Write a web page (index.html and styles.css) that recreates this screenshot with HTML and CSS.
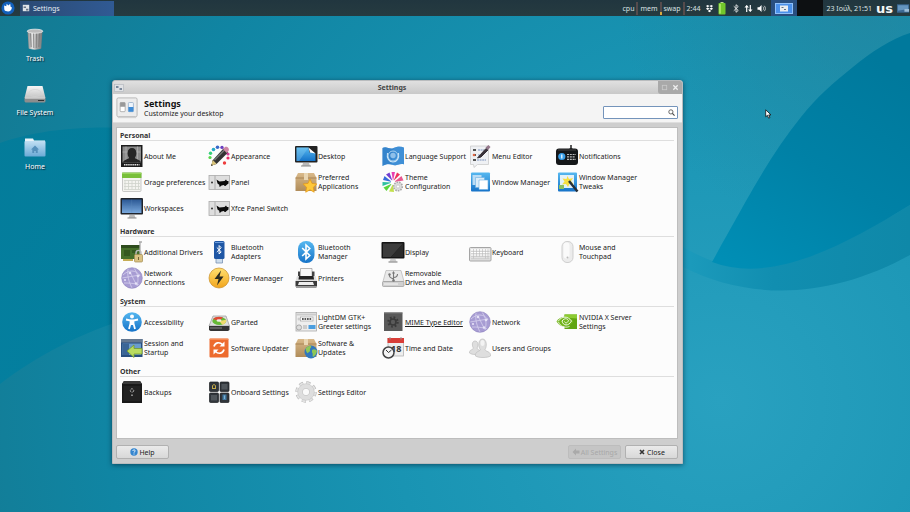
FILE: index.html
```html
<!DOCTYPE html>
<html lang="en">
<head>
<meta charset="utf-8">
<title>Settings</title>
<link rel="stylesheet" href="styles.css">
</head>
<body>
<svg class="defs" aria-hidden="true">
  <defs>
    <linearGradient id="gBlue" x2="0" y2="1"><stop stop-color="#56b8f0"/><stop offset="1" stop-color="#1673c8"/></linearGradient>
    <linearGradient id="gScreen" x2="0" y2="1"><stop stop-color="#2b5894"/><stop offset="1" stop-color="#79a8dc"/></linearGradient>
    <linearGradient id="gGrey" x2="0" y2="1"><stop stop-color="#f6f6f6"/><stop offset="1" stop-color="#c2c2c2"/></linearGradient>
    <linearGradient id="gMetal"><stop stop-color="#888"/><stop offset=".35" stop-color="#e6e6e6"/><stop offset=".6" stop-color="#aaa"/><stop offset="1" stop-color="#777"/></linearGradient>
    <linearGradient id="gBox" x2="0" y2="1"><stop stop-color="#d9b98a"/><stop offset="1" stop-color="#b08c5a"/></linearGradient>
    <linearGradient id="gGold" x2="0" y2="1"><stop stop-color="#ffe070"/><stop offset="1" stop-color="#f2a51c"/></linearGradient>
    <linearGradient id="gFolder" x2="0" y2="1"><stop stop-color="#c2e0f3"/><stop offset="1" stop-color="#6baad6"/></linearGradient>
  </defs>
  <symbol id="about" viewBox="0 0 24 24"><rect x="1" y="1" width="21.500" height="22" fill="#1c1c1c"/><rect x="2.500" y="2.500" width="18.500" height="16" fill="#8b8b8b"/><path d="M6 2.500v16M17.500 2.500v16M2.500 8h18" stroke="#b5b5b5" stroke-width=".7"/><path d="M3 18.500c1-3.500 6-3 6-5-2-2-2.500-9.500 3-9.500s5 7.500 3 9.500c0 2 5 1.500 6 5z" fill="#262626"/><path d="M4 20.800h15.500" stroke="#ddd" stroke-width="1.600" stroke-dasharray="1.500 .6"/></symbol>
  <symbol id="appearance" viewBox="0 0 24 24"><circle cx="3" cy="13.500" r="1.600" fill="#57d64a"/><circle cx="3.500" cy="9.300" r="1.700" fill="#35cf7b"/><circle cx="6.500" cy="5.500" r="1.800" fill="#27a9c7"/><circle cx="10.500" cy="3.300" r="1.800" fill="#3769c9"/><circle cx="15" cy="3.400" r="1.700" fill="#6a3fc0"/><circle cx="21" cy="10" r="1.600" fill="#d83c9b"/><circle cx="21" cy="14" r="1.600" fill="#e92f65"/><circle cx="17.500" cy="19" r="1.700" fill="#ee3d3d"/><path d="M4.500 21.500l1-5L16.500 4.500l4.500 4L9.500 20z" fill="#333"/><path d="M7.500 16L18 5.500" stroke="#777" stroke-width="1.400"/><path d="M16 5l2-2c2-1 5 1.500 3.500 4l-1.800 2z" fill="#cf87a5"/><path d="M4 22l1.800-6 3.800 3.800z" fill="#d9c47b"/><path d="M4 22l.7-2 1.200 1.200z" fill="#222"/></symbol>
  <symbol id="desktop" viewBox="0 0 24 24"><path d="M9 19h6l1 3H8z" fill="#bbb"/><path d="M7 22h10" stroke="#888"/><rect x="1" y="2" width="22.500" height="16.500" rx="1" fill="#222"/><path d="M2.500 3.500h12l7 6V17h-19z" fill="url(#gBlue)"/><path d="M2.500 3.500h12L5 17H2.500z" fill="#8fd2f2" opacity=".35"/><path d="M14.500 3.500h7v6c-2-2-4-2-6-1z" fill="#222"/><path d="M14.500 3.500l7 6-5.500-1z" fill="#fff"/></symbol>
  <symbol id="language" viewBox="0 0 24 24"><path d="M1.500 4c4-2.500 7 2 11 0s7-2 10.500-.5v17c-4-1.500-7 2-11 .5s-7-1-10.500 1z" fill="#3f8fd6"/><path d="M1.500 4c4-2.500 7 2 11 0l-2 16.500c-3-1-6-.5-9 1.500z" fill="#2b79c2" opacity=".5"/><circle cx="12" cy="12" r="5" fill="none" stroke="#a9d1f0"/><circle cx="12" cy="11.500" r="2.700" fill="#8fc0ea"/><path d="M6.500 9c-1 5 1.500 9 5.500 9s6.500-4 5.500-9" fill="none" stroke="#c6e2f6" stroke-width="1.100"/></symbol>
  <symbol id="menu" viewBox="0 0 24 24"><path d="M2.500 2h18v18.500h-11L6 23.500l-.5-3h-3z" fill="#eff1f4" stroke="#ccc" stroke-width=".8"/><path d="M5 6h3M5 11h3M5 16h3" stroke="#555" stroke-width="2"/><path d="M10 6h6M10 11h4M9 16h9" stroke="#7d93bd" stroke-width="1.200" stroke-dasharray="2 .6"/><circle cx="6" cy="11" r="1.300" fill="#d64"/><path d="M9.500 14l3-3.500L18 4.500l2 1.500-7 7z" fill="#38323a" stroke="#38323a"/><path d="M17.500 3.500l3-2.500 2 2-2.500 3z" fill="#96798c"/></symbol>
  <symbol id="notify" viewBox="0 0 24 24"><path d="M16 1v5M14.500 5h3" stroke="#222" stroke-width="1.500"/><rect x="1" y="4.500" width="22" height="16.500" rx="3" fill="#151719"/><path d="M3 6h18" stroke="#444"/><circle cx="6.800" cy="12.500" r="3.600" fill="#3aa0ea"/><path d="M6.800 10.500v4" stroke="#fff" stroke-width="1.200"/><path d="M12 10.500h9M12 12.800h8M12 15.300h9" stroke="#bbb" stroke-width="1.200" stroke-dasharray="2 .8"/></symbol>
  <symbol id="orage" viewBox="0 0 24 24"><rect x="2.500" y="3" width="18.500" height="18.500" rx="1" fill="#f4f4f0" stroke="#bbb" stroke-width=".8"/><path d="M2 2.500h19.500V8H2z" fill="#79bf3a"/><path d="M2 3.500h19.500" stroke="#98d55c"/><path d="M5 10.500v9M8.500 10.500v9M12 10.500v9M15.500 10.500v9M18.500 10.500v9M4 10.500h16M4 13.500h16M4 16.500h16M4 19.500h16" stroke="#cfd3cc" stroke-width=".8"/></symbol>
  <symbol id="panel" viewBox="0 0 24 24"><rect x="2" y="5.500" width="20.500" height="14" fill="#dedede" stroke="#aaa" stroke-width=".8"/><path d="M8 5.500v14" stroke="#aaa"/><circle cx="5" cy="12.500" r="1" fill="#333"/><path d="M9.500 9.500l3 2 5-.5 1.500-1.500 1 1.500h1.500v2.500l-2 1.500-1 1h-1l-.5-1-2.500.5-1 1h-1.500l.5-1.500-2-1.500z" fill="#0b0b0b"/></symbol>
  <symbol id="preferred" viewBox="0 0 24 24"><path d="M4 3h16l2.500 5v13h-21V8z" fill="url(#gBox)"/><path d="M1.500 8h21" stroke="#a88454"/><path d="M10 3h4v7h-4z" fill="#e9d6b3"/><path d="M16 9l2 4.400 4.800.6-3.500 3.300.9 4.900L16 19.800l-4.300 2.400.9-4.900L9.200 14l4.800-.6z" fill="#ffc83a" stroke="#e69a18" stroke-width=".8"/></symbol>
  <symbol id="theme" viewBox="0 0 24 24"><g><path d="M12 11L10.500 2h3.500z" fill="#e83eb0"/><path d="M12.500 11L16 2.500l3 2z" fill="#ed315d"/><path d="M11.500 11L5 4.500l3.500-2z" fill="#743fd1"/><path d="M11 12L2 10l1.500-4z" fill="#386bdb"/><path d="M11 12.500L1.500 16v-4z" fill="#2fc1a0"/><path d="M11 13.500L5.500 21l-3-3.500z" fill="#58d53c"/><path d="M12 14l1 8-5-.5z" fill="#c2e04c"/><path d="M13 12l7.500-6 2 4.500z" fill="#e9578f"/></g><circle cx="12" cy="12.500" r="2.200" fill="#fff"/><circle cx="17" cy="16.500" r="4.300" fill="#ddd" stroke="#aaa" stroke-width="1.600" stroke-dasharray="1.600 1"/><circle cx="17" cy="16.500" r="1.600" fill="#fff" stroke="#bbb" stroke-width=".6"/></symbol>
  <symbol id="wm" viewBox="0 0 24 24"><rect x="3" y="2.500" width="19" height="19" rx="1" fill="url(#gBlue)"/><path d="M4.500 5h9v10h-9z" fill="#b9dcf5"/><path d="M7.500 7.500h9v10h-9z" fill="#dbedf9" stroke="#6caee2" stroke-width=".6"/><path d="M11 10h9v9.500h-9z" fill="#fff" stroke="#6caee2" stroke-width=".6"/></symbol>
  <symbol id="tweaks" viewBox="0 0 24 24"><rect x="3" y="2.500" width="19" height="19" rx="1" fill="url(#gBlue)"/><path d="M5 5h14v13H5z" fill="#e3f1fa"/><path d="M12.500 6l1.500 3 4-1-2 3 2.500 3-4 0-1.500 3-2-3-4 .5 2.500-3-2-3 4 .5z" fill="#f7df42"/><path d="M14 11l8.500 10.500" stroke="#27303a" stroke-width="2.400"/><path d="M4 15h5v4H4z" fill="#8cbf65"/></symbol>
  <symbol id="workspaces" viewBox="0 0 24 24"><path d="M9.500 19h5l1 3h-7z" fill="#bbb"/><path d="M7.500 22h9" stroke="#888"/><rect x=".5" y="2" width="22.500" height="16.500" rx="1" fill="#20242b"/><path d="M2 3.500h19.500V17H2z" fill="url(#gScreen)"/><path d="M11.700 3.500V17M2 10.300h19.500" stroke="#5f8abb" stroke-width=".3"/></symbol>
  <symbol id="drivers" viewBox="0 0 24 24"><path d="M1 5h19v14H1z" fill="#466f2b"/><path d="M1 5h19v3H1z" fill="#2e4c1d"/><path d="M4 10h6v6H4zM12 10h4v3h-4z" fill="#355820"/><path d="M3 19v2h10v-2z" fill="#c6ad55"/><path d="M20 2v19M22 2h-3" stroke="#aaa" stroke-width="1.300"/><path d="M16 15v-2c0-3.500 5-3.500 5 0v2" fill="none" stroke="#bbb" stroke-width="1.400"/><rect x="14.500" y="14.500" width="8" height="7.500" rx="1" fill="#dac283" stroke="#a28b50" stroke-width=".7"/><path d="M18.500 17v3" stroke="#756333"/></symbol>
  <symbol id="btadapter" viewBox="0 0 24 24"><path d="M9 18h6.500v5H9z" fill="#cdddec" stroke="#7892b4" stroke-width=".8"/><rect x="7" y="1" width="10.500" height="18" rx="1.500" fill="#1f57a5"/><path d="M8 2.500h8.500" stroke="#6b9bdb"/><path d="M9.800 7.500l4.400 4.300-2.100 2.200V5.500l2.100 2.200-4.400 4.300" fill="none" stroke="#fff"/></symbol>
  <symbol id="bt" viewBox="0 0 24 24"><rect x="4" y="1" width="16.500" height="22" rx="8" fill="url(#gBlue)"/><path d="M8.200 8l7.600 7.500-3.800 3.500V5l3.800 3.500L8.200 16" fill="none" stroke="#fff" stroke-width="1.600"/></symbol>
  <symbol id="display" viewBox="0 0 24 24"><path d="M9.500 19h5l1 2.500h-7z" fill="#ccc"/><path d="M7.500 22h9" stroke="#777"/><rect x=".5" y="2" width="23" height="16.500" rx="1" fill="#151515"/><path d="M2 3.500h20L10 17H2z" fill="#3c3c3c"/><path d="M22 3.500V17H10z" fill="#2a2a2a"/></symbol>
  <symbol id="keyboard" viewBox="0 0 24 24"><rect x="1.500" y="7.500" width="21.500" height="13.500" rx="1" fill="#e2e2e2" stroke="#a5a5a5"/><path d="M3 10h18.500M3 12.500h18.500M3 15h18.500" stroke="#fff" stroke-width="1.600"/><path d="M3 11.300h18.500M3 13.800h18.500M3 16.300h18.500M5.500 9v9.500M8.500 9v7.500M11.500 9v7.500M14.500 9v7.500M17.500 9v9.500M20 9v9.500M3 18.800h18.500" stroke="#b9b9b9" stroke-width=".6"/></symbol>
  <symbol id="mouse" viewBox="0 0 24 24"><rect x="7" y="1.500" width="11" height="21" rx="5" fill="#ececec" stroke="#cfcfcf"/><rect x="8.500" y="2.500" width="6" height="16" rx="3" fill="#fafafa"/><circle cx="12.500" cy="17.500" r="1" fill="#bbb"/></symbol>
  <symbol id="net" viewBox="0 0 24 24"><circle cx="12" cy="12" r="10.300" fill="#a79cd3"/><path d="M3 9c5-5 13-6 17 1M4 17c4 0 10 0 15 2M8 3c-1 7 1 13 4 19M14 2c4 6 5 11 3 18M2 12l18-3M10 6l6 12" fill="none" stroke="#d6d0ee" stroke-width=".8"/><circle cx="10" cy="7" r="1.300" fill="#e6e2f7"/><circle cx="18" cy="10" r="1.300" fill="#e6e2f7"/><circle cx="16" cy="17.500" r="1.200" fill="#e6e2f7"/><circle cx="5" cy="14" r="1.100" fill="#e6e2f7"/><circle cx="12" cy="12" r="10.300" fill="none" stroke="#8c80be" stroke-width=".6"/></symbol>
  <symbol id="power" viewBox="0 0 24 24"><circle cx="12" cy="12" r="10" fill="url(#gGold)" stroke="#c88d24" stroke-width=".7"/><path d="M14 4.500L7.500 13h4l-1.500 6.500 6.500-9h-4z" fill="#2b2b20"/></symbol>
  <symbol id="printer" viewBox="0 0 24 24"><path d="M6.500 2.500h11.500v9H6.500z" fill="#f7f7f7" stroke="#999" stroke-width=".7"/><path d="M4 5.500h2v5H4zM18 5.500h2.500v5H18z" fill="#444"/><path d="M3 10h18.500l1.500 5H1.500z" fill="#dedede"/><path d="M5 10h14.500l.5 3.500H4.500z" fill="#222"/><path d="M1.500 15h21.500v5.500H1.500z" fill="#3b3b3b"/><path d="M5 16h14l1 3H4z" fill="#eee"/><path d="M2 21.500h20.500" stroke="#999"/></symbol>
  <symbol id="removable" viewBox="0 0 24 24"><path d="M5 4.500h15l3 11H2z" fill="#e9e9e9" stroke="#b5b5b5" stroke-width=".7"/><rect x="1.500" y="15.500" width="21.500" height="5" rx="1" fill="#d0d0d0" stroke="#999" stroke-width=".7"/><path d="M3 18h14" stroke="#f7f7f7"/><path d="M12.500 14.500V6.500M12.500 13c-3-1-4.500-2-4-4M12.500 11.500c3 0 4-2 4-3.500" fill="none" stroke="#777" stroke-width="1.100"/><path d="M11 7.500l1.500-2.500L14 7.500z" fill="#777"/><circle cx="8.500" cy="8.500" r="1.200" fill="#777"/><circle cx="12.500" cy="14.500" r="1.300" fill="#777"/></symbol>
  <symbol id="access" viewBox="0 0 24 24"><circle cx="12" cy="12" r="9.800" fill="url(#gBlue)"/><circle cx="12" cy="6.500" r="2" fill="#fff"/><path d="M6 9.500l4.500 1v3L9 19M18 9.500l-4.500 1v3L15 19" fill="none" stroke="#fff" stroke-width="1.800"/><path d="M10.500 9.500h3V15h-3z" fill="#fff"/></symbol>
  <symbol id="gparted" viewBox="0 0 24 24"><path d="M6 6h13l3.500 10H2z" fill="#ddd" stroke="#999" stroke-width=".7"/><path d="M2 16h20.500v4l-1.500 1H3.500L2 20z" fill="#333"/><path d="M3 18h12" stroke="#888"/><ellipse cx="12.300" cy="11" rx="7" ry="4" fill="#65b936"/><path d="M12.300 11L6 9c2-2.500 7-3 10-1.500z" fill="#e04a36"/><path d="M12.300 11l3 3.800c3-.8 4.500-3 3.900-5z" fill="#eed96c"/><ellipse cx="12" cy="10.500" rx="2.500" ry="1.300" fill="#f1eee3"/></symbol>
  <symbol id="lightdm" viewBox="0 0 24 24"><rect x="2" y="2.500" width="20.500" height="18.500" fill="#eee" stroke="#aaa" stroke-width=".8"/><path d="M2 4.500h20.500" stroke="#ccc" stroke-width="2"/><rect x="6.500" y="7" width="12.500" height="4" fill="#fff" stroke="#999" stroke-width=".6"/><path d="M8 9h9.500" stroke="#222" stroke-width="1.700" stroke-dasharray="1.700 .8"/><rect x="14.500" y="15" width="7" height="4" fill="#4b9edf"/><path d="M9 15h4v4H9z" fill="#ccc"/><circle cx="5" cy="17.500" r="2.600" fill="#ddd" stroke="#999" stroke-width=".8"/><circle cx="5" cy="9" r="1.500" fill="#ccc"/></symbol>
  <symbol id="mime" viewBox="0 0 24 24"><rect x="3" y="2.500" width="18.500" height="18.500" fill="#5a5a5a"/><path d="M3 3h18.500" stroke="#777"/><circle cx="12" cy="12" r="4.600" fill="none" stroke="#3a3a3a" stroke-width="2.200" stroke-dasharray="1.700 1.910"/><circle cx="12" cy="12" r="3" fill="none" stroke="#3a3a3a" stroke-width="1.600"/></symbol>
  <symbol id="nvidia" viewBox="0 0 24 24"><path d="M9.500 4.500H22v14.500H9.500z" fill="#62a512"/><path d="M9.500 4.500H22v4l-12.500-1z" fill="#8ccb31"/><path d="M1.500 11.500C5 6 13 4.500 18.500 11.500 14 18 6 19 1.500 11.500z" fill="#72b51c"/><path d="M3 11.500c4-6 10-5.500 13.500-.5-3 5.500-8.500 5-9.500 0 2.500-3 5-3 6.500-.3-1.500 3-3.500 2.500-4 .8" fill="none" stroke="#f3faea" stroke-width="1"/><path d="M3.500 12c1.500 4 6 6.500 11 4.500" fill="none" stroke="#fff" stroke-width=".8"/></symbol>
  <symbol id="session" viewBox="0 0 24 24"><rect x="1" y="3" width="21.500" height="18" fill="#284f80"/><rect x="1" y="3" width="21.500" height="3.500" fill="#657991"/><path d="M2.500 7.500H21v11.500H2.500z" fill="#6b9dcc"/><path d="M2.500 7.500H9v11.500H2.500z" fill="#3a6596"/><path d="M7 15l7-6v3.500h8V18h-8v3.500z" fill="#b9dc60" stroke="#739b2e" stroke-width=".8"/></symbol>
  <symbol id="updater" viewBox="0 0 24 24"><rect x="2.500" y="2.500" width="19" height="19" rx="1" fill="#ed6b2e"/><path d="M2.500 3.200h19" stroke="#f99b68"/><path d="M7 10.500c1-4 5.500-5 8.500-2M17 13.500c-1 4-5.500 5-8.500 2" fill="none" stroke="#fff" stroke-width="1.700"/><path d="M17.500 5.500v5h-5zM6.500 18.500v-5h5z" fill="#fff"/></symbol>
  <symbol id="software" viewBox="0 0 24 24"><path d="M4 3h16l2.500 5v13h-21V8z" fill="url(#gBox)"/><path d="M1.500 8h21" stroke="#a88454"/><path d="M10 3h4v6h-4z" fill="#e9d6b3"/><circle cx="17" cy="16" r="6.500" fill="#3177bd"/><path d="M12 12c2-2 4-2.500 5-2 1 1.500-1.500 2-1 4s-2 2-2 3-3-2-2-5zM18 14c2-1.500 4-.5 5 1-.5 3-2 5-4 6-1-2 .5-3-1-4.500z" fill="#8ec756"/></symbol>
  <symbol id="users" viewBox="0 0 24 24"><g fill="#dedede" stroke="#bdbdbd" stroke-width=".7"><path d="M1.500 17c0-4 3-2.500 4-5-1.500-1.500-2-7 1.500-7s3.500 5 2 7c.5 2.500 4 1 4 5-2 2-9 2-11.500 0z"/><path d="M7.500 20c-.5-5 4-4 5-6.500-2.500-2-2.500-10.500 2-10.500s4.500 8 2.500 10.500c.5 2.500 6 1.500 5.500 6.500-3 2-12 2-15 0z"/></g><ellipse cx="14.500" cy="7" rx="2" ry="3" fill="#f3f3f3"/></symbol>
  <symbol id="backups" viewBox="0 0 24 24"><path d="M4 1h16l2 3v19H2V4z" fill="#191919"/><path d="M4 1h16l2 3H2z" fill="#3a3a3a"/><path d="M3.500 6h17v15h-17z" fill="#222"/><circle cx="12" cy="10.500" r="1.700" fill="none" stroke="#bbb" stroke-dasharray="2 1"/><path d="M12 14.500v1.500" stroke="#ccc" stroke-width="1.200"/></symbol>
  <symbol id="onboard" viewBox="0 0 24 24"><g fill="#30353a" stroke="#1c1f22" stroke-width=".7"><rect x="2.500" y="2" width="9" height="9.500" rx="1"/><rect x="13" y="2" width="9" height="9.500" rx="1"/><rect x="2.500" y="13" width="9" height="9.500" rx="1"/><rect x="13" y="13" width="9" height="9.500" rx="1"/></g><path d="M14.500 4h6v5.500h-6zM4 15h6v5.500H4z" fill="#4f555a"/><path d="M5 8.500h4M5.500 8V5.500c0-1 3-1 3 0V8" fill="none" stroke="#c4aa49"/><path d="M15.500 14.500h4v5.500h-4z" fill="#417aa3"/><path d="M17.500 15.500v3.500" stroke="#7fb0d0"/></symbol>
  <symbol id="gear" viewBox="0 0 24 24"><circle cx="12" cy="12" r="9" fill="none" stroke="#b4b4b4" stroke-width="3.400" stroke-dasharray="4 3.070"/><circle cx="12" cy="12" r="8.900" fill="none" stroke="#e4e4e4" stroke-width="2.400" stroke-dasharray="3.400 3.590" stroke-dashoffset="-.3"/><circle cx="12" cy="12" r="6.300" fill="none" stroke="#dedede" stroke-width="4"/><circle cx="12" cy="12" r="8.300" fill="none" stroke="#c5c5c5" stroke-width=".6"/><circle cx="12" cy="12" r="3.800" fill="#fafafa" stroke="#bbb" stroke-width=".8"/></symbol>
  <symbol id="toggle" viewBox="0 0 24 24"><rect x="1" y="1" width="22" height="20.500" rx="1.500" fill="#ececec" stroke="#b3b3b3"/><path d="M2 22.500h20" stroke="#ccc"/><rect x="4.500" y="6" width="5.500" height="10" rx="1" fill="#fff" stroke="#999" stroke-width=".8"/><path d="M4.500 6H10v4.500H4.500z" fill="#999"/><rect x="13.500" y="6" width="5.500" height="10" rx="1" fill="#eef5fc" stroke="#8fa9c5" stroke-width=".8"/><path d="M13.500 11H19v5h-5.500z" fill="#3f8cd6"/></symbol>
  <symbol id="mini" viewBox="0 0 10 8"><rect x=".5" y=".5" width="9" height="7" fill="#e0e2e5" stroke="#b5b9bf" stroke-width=".7"/><path d="M2 2h2.500v2H2zM5.500 4H8v2H5.500z" fill="#7a889a"/></symbol>
</svg>

<main class="desktop">
  <svg class="wallpaper" viewBox="0 0 910 512" preserveAspectRatio="none" aria-hidden="true">
    <defs>
      <radialGradient id="sky" gradientUnits="userSpaceOnUse" cx="720" cy="400" r="820"><stop stop-color="#29a1c0"/><stop offset=".4" stop-color="#1994b3"/><stop offset=".75" stop-color="#1085a3"/><stop offset="1" stop-color="#147991"/></radialGradient>
      <radialGradient id="haze" gradientUnits="userSpaceOnUse" cx="860" cy="0" r="240"><stop stop-color="#26839b" stop-opacity=".6"/><stop offset="1" stop-color="#26839b" stop-opacity="0"/></radialGradient>
      <linearGradient id="hill" gradientUnits="userSpaceOnUse" x1="880" y1="60" x2="740" y2="270"><stop stop-color="#00799c"/><stop offset=".5" stop-color="#0081a6"/><stop offset="1" stop-color="#008eb5"/></linearGradient>
      <linearGradient id="low" x1="0" y1="0" x2="1" y2="0"><stop stop-color="#1c9bbc"/><stop offset=".4" stop-color="#118eb0"/><stop offset="1" stop-color="#0f88a8"/></linearGradient>
      <linearGradient id="left" x1="0" y1="0" x2="0" y2="1"><stop stop-color="#007c9b"/><stop offset="1" stop-color="#007fa0"/></linearGradient>
    </defs>
    <path fill="url(#sky)" d="M0 0h910v512H0z"/>
    <path fill="url(#haze)" d="M600 0h310v260H600z"/>
    <path fill="url(#left)" opacity=".8" d="M0 143c35-12 75-17 130-15v190C80 333 35 357 0 384z"/>
    <path fill="url(#low)" d="M683 247c55 32 105 32 227-42v50c-80 44-160 46-227 12z"/>
    <path fill="url(#hill)" d="M910 33C891 39 871 52 853 67C833 83 817 97 801 117C783 139 768 163 754 187C742 208 731 228 712 262C770 284 840 248 910 205z"/>
  </svg>

  <header class="panel">
    <button class="whisker" aria-label="Applications"><svg viewBox="0 0 16 16"><circle cx="8" cy="8" r="7.500" fill="#1260bb"/><path d="M3.500 5l2.500 1 .5-3 2 2 2-2 .5 3.500 1.500 1c-.5 4-3.500 5.500-7 4C3 10.500 4 8 3.500 5z" fill="#fff"/></svg></button>
    <button class="task"><svg viewBox="0 0 10 10"><rect x="1" y="1" width="8" height="8" fill="#dfe3e8"/><path d="M2 3h3v2H2zM5 6h3v2H5z" fill="#687687"/></svg>Settings</button>
    <div class="tray">
      <div class="meters"><span>cpu</span><i></i><span>mem</span><i class="hot"></i><span>swap</span><i></i></div>
      <span>2:44</span>
      <svg class="w9" viewBox="0 0 9 10"><path d="M2.500 1l2 1.300-2 1.400-2-1.400zM6.500 1l2 1.300-2 1.400-2-1.400zM2.500 4l2 1.300-2 1.400-2-1.400zM6.500 4l2 1.300-2 1.400-2-1.400zM4.500 6.500l2 1.200-2 1.500-2-1.500z" fill="#fff"/></svg>
      <svg class="w8" viewBox="0 0 8 13"><path d="M2.500 0h3v1h-3z" fill="#b6d98f"/><rect x=".5" y="1" width="7" height="11.500" rx=".8" fill="#72c72c"/><path d="M2 2v9.500" stroke="#b5ee72" stroke-width="1.500"/></svg>
      <svg class="w8 bt" viewBox="0 0 8 10"><path d="M1.500 2.500l5 4.700-2.500 2V.8l2.500 2-5 4.700" fill="none" stroke="#e4e8e9"/></svg>
      <svg class="w9" viewBox="0 0 9 10"><path d="M2.500 9V2M6.500 1v7" stroke="#fff" stroke-width="1.300"/><path d="M0 4l2.500-3L5 4zM4 6l2.500 3L9 6z" fill="#fff"/></svg>
      <svg class="w10" viewBox="0 0 10 10"><path d="M0 3.500h2L4.500 1v8L2 6.500H0z" fill="#fff"/><path d="M6 3c1 1 1 3 0 4M7.500 2c1.700 1.500 1.700 4.500 0 6" fill="none" stroke="#ddd" stroke-width=".9"/></svg>
      <div class="pager"><span class="current"><svg viewBox="0 0 18 11"><rect x=".5" y=".5" width="17" height="10" fill="#4a90ea" stroke="#8fc0fa"/><rect x="5" y="2.500" width="8" height="6" fill="#e8ecf0"/><path d="M6.500 4h2v1h-2zM9 6h2v1H9z" fill="#637385"/></svg></span><span class="empty"></span></div>
      <time>23 Ιούλ, 21:51</time>
      <strong class="layout">us</strong>
      <svg class="w14" viewBox="0 0 14 9"><path d="M0 0h13v9H0z" fill="#3c6994"/><path d="M1 1h11v4L1 7z" fill="#6595bf"/><path d="M8 5h5v3H8z" fill="#9dbdd8"/></svg>
    </div>
  </header>

  <nav class="shortcuts" aria-label="Desktop">
    <button><svg viewBox="0 0 24 24"><path d="M4.500 4h15l-1.300 17.500c-3 1.500-9.500 1.500-12.500 0z" fill="url(#gMetal)"/><path d="M7.500 6l.7 14M10.500 6l.3 15M13.500 6l-.3 15M16.500 6l-.7 14" stroke="#777" stroke-width=".8"/><ellipse cx="12" cy="4.200" rx="7.800" ry="2" fill="#bcbcbc" stroke="#eee" stroke-width=".8"/></svg><span>Trash</span></button>
    <button><svg viewBox="0 0 24 24"><path d="M4.500 5h15l3 12h-21z" fill="url(#gGrey)"/><path d="M1.500 16.500h21V20c0 1-1 1.500-2 1.500h-17c-1 0-2-.5-2-1.500z" fill="#8d8d8d"/><path d="M2 17h20" stroke="#eee"/><path d="M15 19.500h6" stroke="#333"/><ellipse cx="12" cy="12" rx="6" ry="3.500" fill="none" stroke="#d2d2d2" stroke-width=".7"/></svg><span>File System</span></button>
    <button><svg viewBox="0 0 24 24"><path d="M2 3.500h8l1 2h11V11H2z" fill="#eaf3f9"/><rect x="1.500" y="6" width="21" height="15.500" rx="1" fill="url(#gFolder)"/><path d="M12 10.500L8 14.500h1.300V18h1.900v-2h1.600v2h1.900v-3.500H16z" fill="#5590bb"/></svg><span>Home</span></button>
  </nav>

  <section class="window" aria-label="Settings">
    <div class="titlebar">
      <svg viewBox="0 0 10 8"><use href="#mini"/></svg>
      <span>Settings</span>
      <div class="controls"><button aria-label="Maximize"><svg viewBox="0 0 8 8"><rect x="1.500" y="1.500" width="5" height="5" fill="none" stroke="#c9c9c9"/></svg></button><button aria-label="Close window"><svg viewBox="0 0 8 8"><path d="M1.500 1.500l5 5M6.500 1.500l-5 5" stroke="#eee" stroke-width="1.500"/></svg></button></div>
    </div>
    <div class="heading">
      <svg viewBox="0 0 24 24"><use href="#toggle"/></svg>
      <div><h1>Settings</h1><p>Customize your desktop</p></div>
      <label class="search"><input type="text" aria-label="Search settings"><svg viewBox="0 0 8 8"><circle cx="3.300" cy="3.300" r="2.400" fill="none" stroke="#555"/><path d="M5 5l2.500 2.500" stroke="#444" stroke-width="1.300"/></svg></label>
    </div>
    <div class="list">
      <section><h2>Personal</h2><div class="grid">
        <button><svg><use href="#about"/></svg><span>About Me</span></button>
        <button><svg><use href="#appearance"/></svg><span>Appearance</span></button>
        <button><svg><use href="#desktop"/></svg><span>Desktop</span></button>
        <button><svg><use href="#language"/></svg><span>Language Support</span></button>
        <button><svg><use href="#menu"/></svg><span>Menu Editor</span></button>
        <button><svg><use href="#notify"/></svg><span>Notifications</span></button>
        <button><svg><use href="#orage"/></svg><span>Orage preferences</span></button>
        <button><svg><use href="#panel"/></svg><span>Panel</span></button>
        <button><svg><use href="#preferred"/></svg><span>Preferred<br>Applications</span></button>
        <button><svg><use href="#theme"/></svg><span>Theme<br>Configuration</span></button>
        <button><svg><use href="#wm"/></svg><span>Window Manager</span></button>
        <button><svg><use href="#tweaks"/></svg><span>Window Manager<br>Tweaks</span></button>
        <button><svg><use href="#workspaces"/></svg><span>Workspaces</span></button>
        <button><svg><use href="#panel"/></svg><span>Xfce Panel Switch</span></button>
      </div></section>
      <section><h2>Hardware</h2><div class="grid">
        <button><svg><use href="#drivers"/></svg><span>Additional Drivers</span></button>
        <button><svg><use href="#btadapter"/></svg><span>Bluetooth<br>Adapters</span></button>
        <button><svg><use href="#bt"/></svg><span>Bluetooth<br>Manager</span></button>
        <button><svg><use href="#display"/></svg><span>Display</span></button>
        <button><svg><use href="#keyboard"/></svg><span>Keyboard</span></button>
        <button><svg><use href="#mouse"/></svg><span>Mouse and<br>Touchpad</span></button>
        <button><svg><use href="#net"/></svg><span>Network<br>Connections</span></button>
        <button><svg><use href="#power"/></svg><span>Power Manager</span></button>
        <button><svg><use href="#printer"/></svg><span>Printers</span></button>
        <button><svg><use href="#removable"/></svg><span>Removable<br>Drives and Media</span></button>
      </div></section>
      <section><h2>System</h2><div class="grid">
        <button><svg><use href="#access"/></svg><span>Accessibility</span></button>
        <button><svg><use href="#gparted"/></svg><span>GParted</span></button>
        <button><svg><use href="#lightdm"/></svg><span>LightDM GTK+<br>Greeter settings</span></button>
        <button class="hover"><svg><use href="#mime"/></svg><span>MIME Type Editor</span></button>
        <button><svg><use href="#net"/></svg><span>Network</span></button>
        <button><svg><use href="#nvidia"/></svg><span>NVIDIA X Server<br>Settings</span></button>
        <button><svg><use href="#session"/></svg><span>Session and<br>Startup</span></button>
        <button><svg><use href="#updater"/></svg><span>Software Updater</span></button>
        <button><svg><use href="#software"/></svg><span>Software &amp;<br>Updates</span></button>
        <button><svg viewBox="0 0 24 24"><rect x="7" y="2.500" width="15.500" height="17.500" fill="#eee" stroke="#aaa" stroke-width=".7"/><path d="M6.500 2h16.500v5H6.500z" fill="#d83d37"/><path d="M9 1v2.500M20 1v2.500" stroke="#999"/><text x="10" y="16" class="day">18</text><circle cx="7.500" cy="16.500" r="5.500" fill="#f4f4f4" stroke="#444" stroke-width="1.500"/><path d="M5 14l2.500 2.500L10.500 14" fill="none" stroke="#333"/></svg><span>Time and Date</span></button>
        <button><svg><use href="#users"/></svg><span>Users and Groups</span></button>
      </div></section>
      <section><h2>Other</h2><div class="grid">
        <button><svg><use href="#backups"/></svg><span>Backups</span></button>
        <button><svg><use href="#onboard"/></svg><span>Onboard Settings</span></button>
        <button><svg><use href="#gear"/></svg><span>Settings Editor</span></button>
      </div></section>
    </div>
    <footer>
      <button class="help"><svg viewBox="0 0 8 8"><circle cx="4" cy="4" r="3.700" fill="#3586cf"/><path d="M2.800 3c0-1.600 2.600-1.400 2.400 0C5 3.800 4 3.800 4 4.700M4 5.500v1" fill="none" stroke="#fff" stroke-width=".9"/></svg>Help</button>
      <button disabled><svg viewBox="0 0 8 8"><path d="M.5 4L4 .5v2h3.500v3H4v2z" fill="#aaa"/></svg>All Settings</button>
      <button class="close"><svg viewBox="0 0 8 8"><path d="M2 2l4 4M6 2L2 6" stroke="#333" stroke-width="1.600"/></svg>Close</button>
    </footer>
  </section>

  <svg class="cursor" viewBox="0 0 7 10" aria-hidden="true"><path d="M.7.800v7l1.700-1.500L3.600 9.200l1.300-.6-1.200-2.700H6z" fill="#fff" stroke="#111" stroke-width=".8"/></svg>
</main>
</body>
</html>
```
FILE: styles.css
```css
* { box-sizing: border-box; }
body { margin: 0; font: 7px/9px "Noto Sans", "Open Sans", sans-serif; color: #222; }
button { font: inherit; color: inherit; margin: 0; padding: 0; border: 0; background: none; }
h1, h2, p { margin: 0; }
svg { display: block; flex: none; }
.defs { position: absolute; width: 0; height: 0; }
.day { font: bold 9px "Noto Sans", sans-serif; fill: #333; }

.desktop { position: relative; min-height: 100vh; overflow: hidden; }
.wallpaper { position: absolute; inset: 0; width: 100%; height: 100%; }

.panel { position: relative; display: flex; align-items: center; height: 16px; background: linear-gradient(#21363f, #263b40); color: #dbe2e4; }
.whisker { width: 20px; }
.whisker svg { width: 14px; height: 14px; margin-left: 1px; }
.task { display: flex; align-items: center; gap: 3px; width: 94px; height: 15px; padding-left: 2px; background: linear-gradient(90deg, #2b4a73, #305a94); color: #e8edf2; }
.task svg { width: 8px; height: 8px; }
.tray { display: flex; align-items: center; gap: 4px; height: 16px; margin-left: auto; }
.meters { display: flex; align-items: center; gap: 2px; margin-right: -2px; }
.meters i { width: 2px; height: 13px; background: #554b4c; }
.meters .hot { background: linear-gradient(#554b4c 80%, #d8a840 80%); }
.tray .w8 { width: 8px; height: 13px; }
.tray .bt { height: 9px; margin-left: 2px; }
.tray .w9 { width: 9px; height: 9px; }
.tray .w10 { width: 10px; height: 9px; }
.tray .w14 { width: 13px; height: 9px; }
.pager { display: flex; height: 16px; }
.pager span { width: 26px; }
.pager .current { display: flex; align-items: center; justify-content: center; background: #294f80; }
.pager .current svg { width: 18px; height: 11px; }
.pager .empty { background: #0d1012; }
.layout { font: bold 13px/15px "DejaVu Sans", sans-serif; color: #f4f6f6; }

.shortcuts { position: relative; display: flex; flex-direction: column; gap: 18px; width: 70px; padding-top: 11px; }
.shortcuts button { display: flex; flex-direction: column; align-items: center; gap: 3px; height: 36px; color: #fff; text-shadow: 1px 1px 1px #123; }
.shortcuts svg { width: 24px; height: 24px; }

.window { position: absolute; left: 112px; right: 227px; top: 80px; bottom: 48px; display: flex; flex-direction: column; border: 1px solid #b9bcbe; border-radius: 3px 3px 0 0; background: #cecece; box-shadow: 0 1px 5px rgba(0, 30, 50, .6); overflow: hidden; }
.titlebar { display: grid; grid-template-columns: 13px 1fr 24px; align-items: center; height: 13px; background: linear-gradient(#e0e0e0, #c9c9c9); font-weight: bold; text-align: center; color: #444; }
.titlebar > svg { width: 10px; height: 8px; margin-left: 1px; }
.controls { display: flex; justify-content: space-evenly; align-items: center; height: 13px; background: #a9a9a9; border-radius: 0 0 0 3px; }
.controls svg { width: 7px; height: 7px; }
.heading { display: flex; align-items: center; gap: 5px; height: 29px; padding: 0 4px 0 2px; background: #f4f4f4; border-bottom: 1px solid #dedede; }
.heading > svg { width: 24px; height: 22px; }
.heading h1 { font-size: 9px; line-height: 11px; color: #111; }
.heading p { line-height: 10px; }
.search { display: flex; align-items: center; width: 75px; height: 13px; margin: 8px 0 0 auto; padding-right: 2px; border: 1px solid #7494bb; border-radius: 1px; background: #fff; }
.search input { flex: 1; min-width: 0; height: 9px; padding: 0 2px; border: 0; outline: 0; font: inherit; background: none; }
.search svg { width: 7px; height: 7px; }

.list { flex: 1; margin: 4px 4px 0 3px; padding: 3px 3px 0; border: 1px solid #bdbdbd; background: #fcfcfc; overflow: hidden; }
.list section { margin-bottom: 7px; }
.list h2 { height: 10px; font-size: 7px; line-height: 9px; color: #333; border-bottom: 1px solid #dedede; }
.grid { display: grid; grid-template-columns: repeat(auto-fill, 87px); gap: 2px 0; padding-top: 3px; }
.grid button { display: flex; align-items: center; height: 24px; text-align: left; white-space: nowrap; }
.grid svg { width: 24px; height: 24px; }
.grid .hover { text-decoration: underline; }

footer { display: flex; gap: 4px; padding: 6px 4px 4px 3px; }
footer button { display: flex; align-items: center; justify-content: center; gap: 1px; width: 53px; height: 14px; border: 1px solid #b1b1b1; border-radius: 2px; background: linear-gradient(#eaeaea, #d8d8d8); }
footer svg { width: 8px; height: 8px; }
footer .help { margin-right: auto; }
footer button:disabled { color: #a8a8a8; border-color: #bdbdbd; background: #c5c5c5; }

.cursor { position: absolute; left: 765px; top: 109px; width: 7px; height: 10px; }
```
